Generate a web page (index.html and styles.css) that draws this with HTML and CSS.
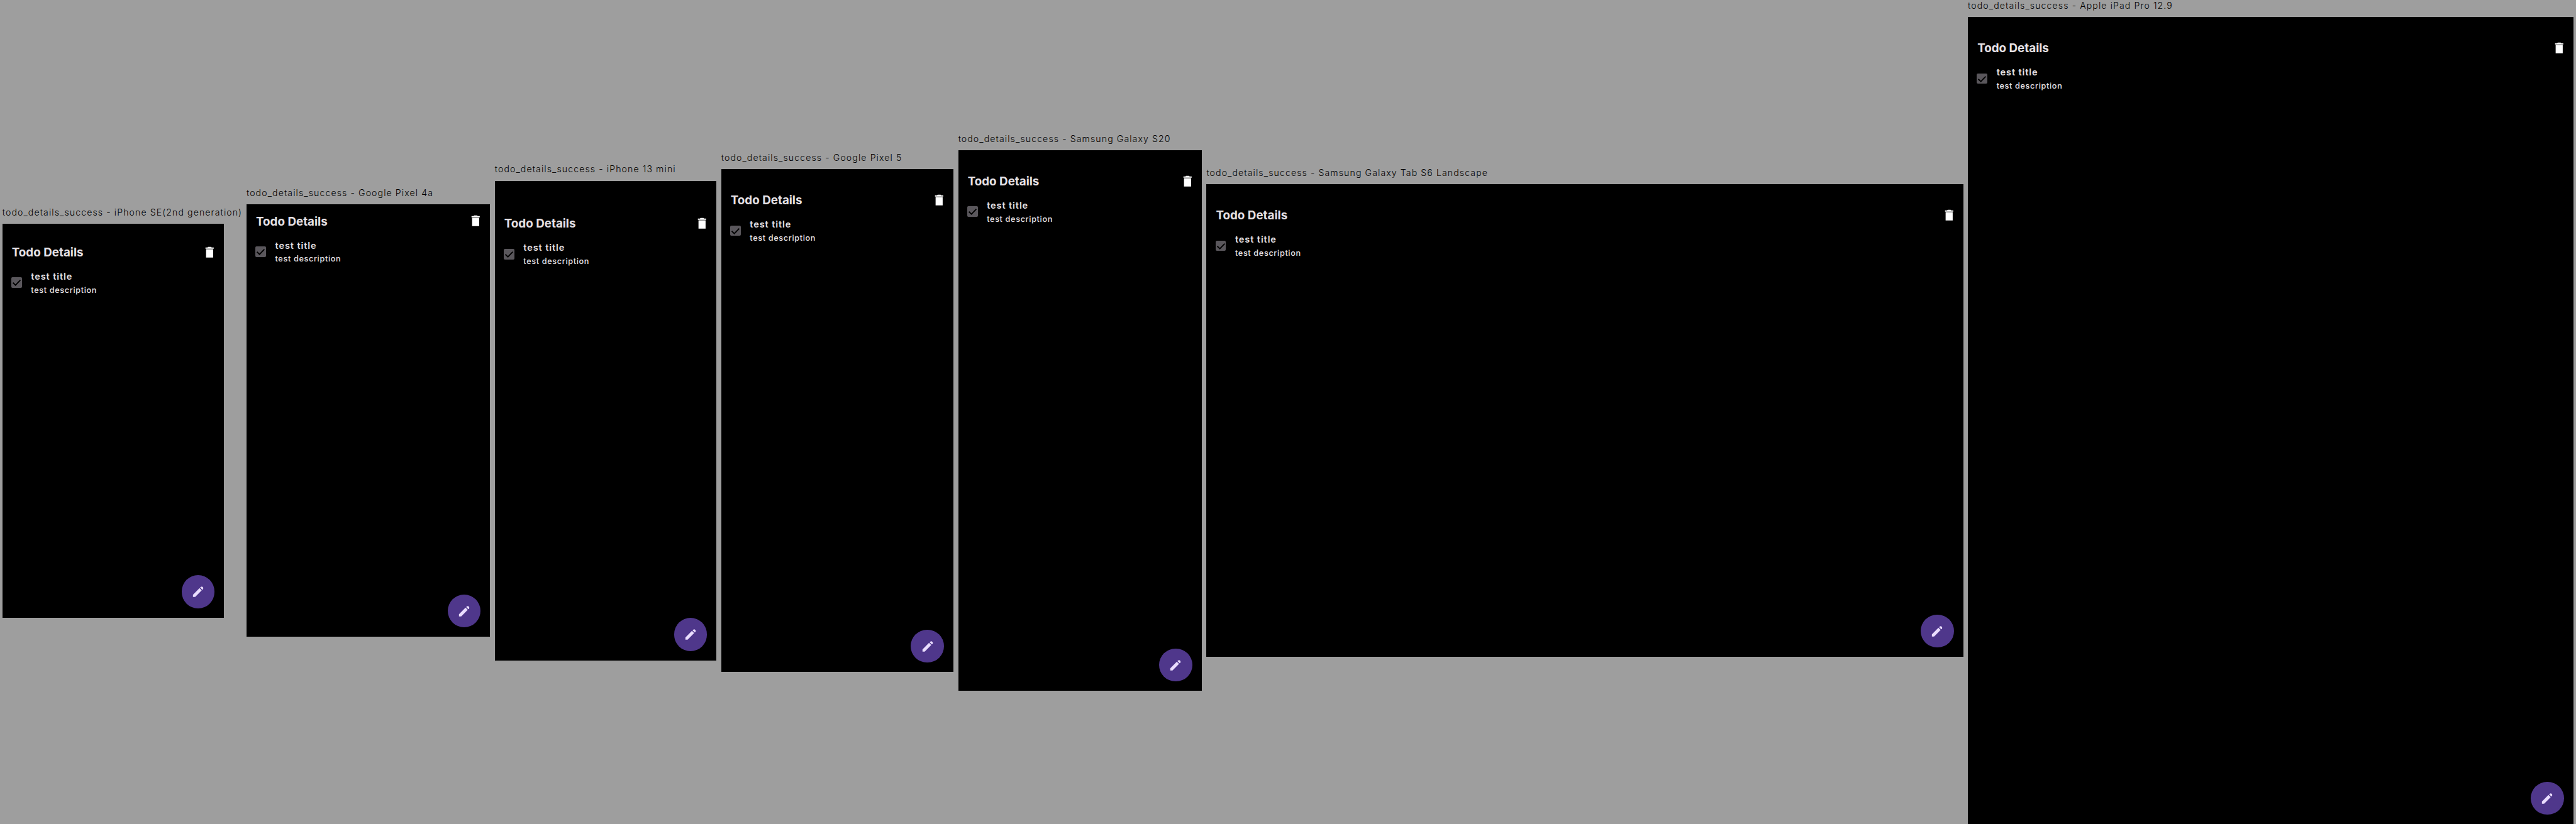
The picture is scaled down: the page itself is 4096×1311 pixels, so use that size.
FILE: index.html
```html
<!DOCTYPE html>
<html lang="en">
<head>
<meta charset="utf-8">
<title>todo_details_success</title>
<link rel="stylesheet" href="styles.css">
</head>
<body>
<svg class="symbols" aria-hidden="true">
  <symbol id="delete" viewBox="0 0 24 24"><path d="M6 21h12V7H6v14zM19 4h-3.500l-1-1h-5l-1 1H5v2h14V4z"/></symbol>
  <symbol id="edit" viewBox="0 0 24 24"><path d="M3 17.250V21h3.750L17.810 9.940l-3.750-3.750L3 17.250zM15.130 5.120L18.880 8.870A2.800 2.800 0 1 0 15.130 5.120z"/></symbol>
  <symbol id="check" viewBox="0 0 18 18"><path d="M2.700 9.300l4.400 4.200 8.200-8.600"/></symbol>
</svg>
<main class="board" id="board"></main>
<template id="device">
  <section class="device">
    <h2 class="label"></h2>
    <div class="screen">
      <header class="appbar">
        <h1 class="heading"><span>Todo Details</span></h1>
        <svg class="icon"><use href="#delete"/></svg>
      </header>
      <div class="todo">
        <span class="checkbox"><svg class="check"><use href="#check"/></svg></span>
        <div class="texts">
          <p class="title"><span>test title</span></p>
          <p class="description"><span>test description</span></p>
        </div>
      </div>
      <div class="fab"><svg class="icon"><use href="#edit"/></svg></div>
    </div>
  </section>
</template>
<script src="board.js"></script>
</body>
</html>
```
FILE: styles.css
```css
* { box-sizing: border-box; margin: 0; padding: 0; }

html { background: #9e9e9e; overflow: hidden; }

body {
  font-family: Inter, "Liberation Sans", sans-serif;
  zoom: 0.94;
}

.symbols { display: none; }

.board {
  display: flex;
  align-items: center;
  width: 4357px;
  height: 1395px;
}

.device { flex: none; padding: 0 4px; }
.device:first-child { width: 413px; }

.label {
  height: 29px;
  line-height: 20px;
  font-size: 15px;
  font-weight: 300;
  letter-spacing: 1.17px;
  white-space: nowrap;
  color: #000;
}

.screen {
  display: flex;
  flex-direction: column;
  background: #000;
  color: #e6e1e5;
}

.appbar {
  display: flex;
  align-items: center;
  justify-content: space-between;
  height: 56px;
  padding: 0 12px 0 16px;
}

.heading { padding-top: 2.600px; font-size: 20px; line-height: 28px; font-weight: 700; letter-spacing: 0; }

.icon { display: block; width: 24px; height: 24px; fill: #fff; }

.todo { display: flex; align-items: center; height: 48px; padding-left: 15px; gap: 15.500px; }

.checkbox { width: 18px; height: 18px; border-radius: 2px; background: #5a575c; }
.check { display: block; width: 18px; height: 18px; fill: none; stroke: #000; stroke-width: 2; }

.texts { padding-top: 2px; }
.title { font-size: 15.500px; line-height: 23px; font-weight: 600; letter-spacing: 0.95px; }
.description { font-size: 13.500px; line-height: 21px; font-weight: 500; letter-spacing: 0.68px; }

.fab {
  display: flex;
  align-items: center;
  justify-content: center;
  width: 56px;
  height: 56px;
  margin: auto 16px 16px auto;
  border-radius: 50%;
  background: #4f378b;
}
.fab .icon { fill: #eaddff; }
```
FILE: board.js
```js
const devices = [
  { name: "iPhone SE(2nd generation)", width: 375, height: 667, safeTop: 20 },
  { name: "Google Pixel 4a", width: 412, height: 732, safeTop: 0 },
  { name: "iPhone 13 mini", width: 375, height: 812, safeTop: 44 },
  { name: "Google Pixel 5", width: 393, height: 851, safeTop: 24 },
  { name: "Samsung Galaxy S20", width: 412, height: 915, safeTop: 24 },
  { name: "Samsung Galaxy Tab S6 Landscape", width: 1280, height: 800, safeTop: 24 },
  { name: "Apple iPad Pro 12.9", width: 1024, height: 1366, safeTop: 24 },
];

const board = document.getElementById("board");
const template = document.getElementById("device");

for (const device of devices) {
  const node = template.content.cloneNode(true);
  node.querySelector(".label").textContent = `todo_details_success - ${device.name}`;
  const screen = node.querySelector(".screen");
  screen.style.width = `${device.width}px`;
  screen.style.height = `${device.height}px`;
  screen.style.paddingTop = `${device.safeTop}px`;
  board.append(node);
}
```
